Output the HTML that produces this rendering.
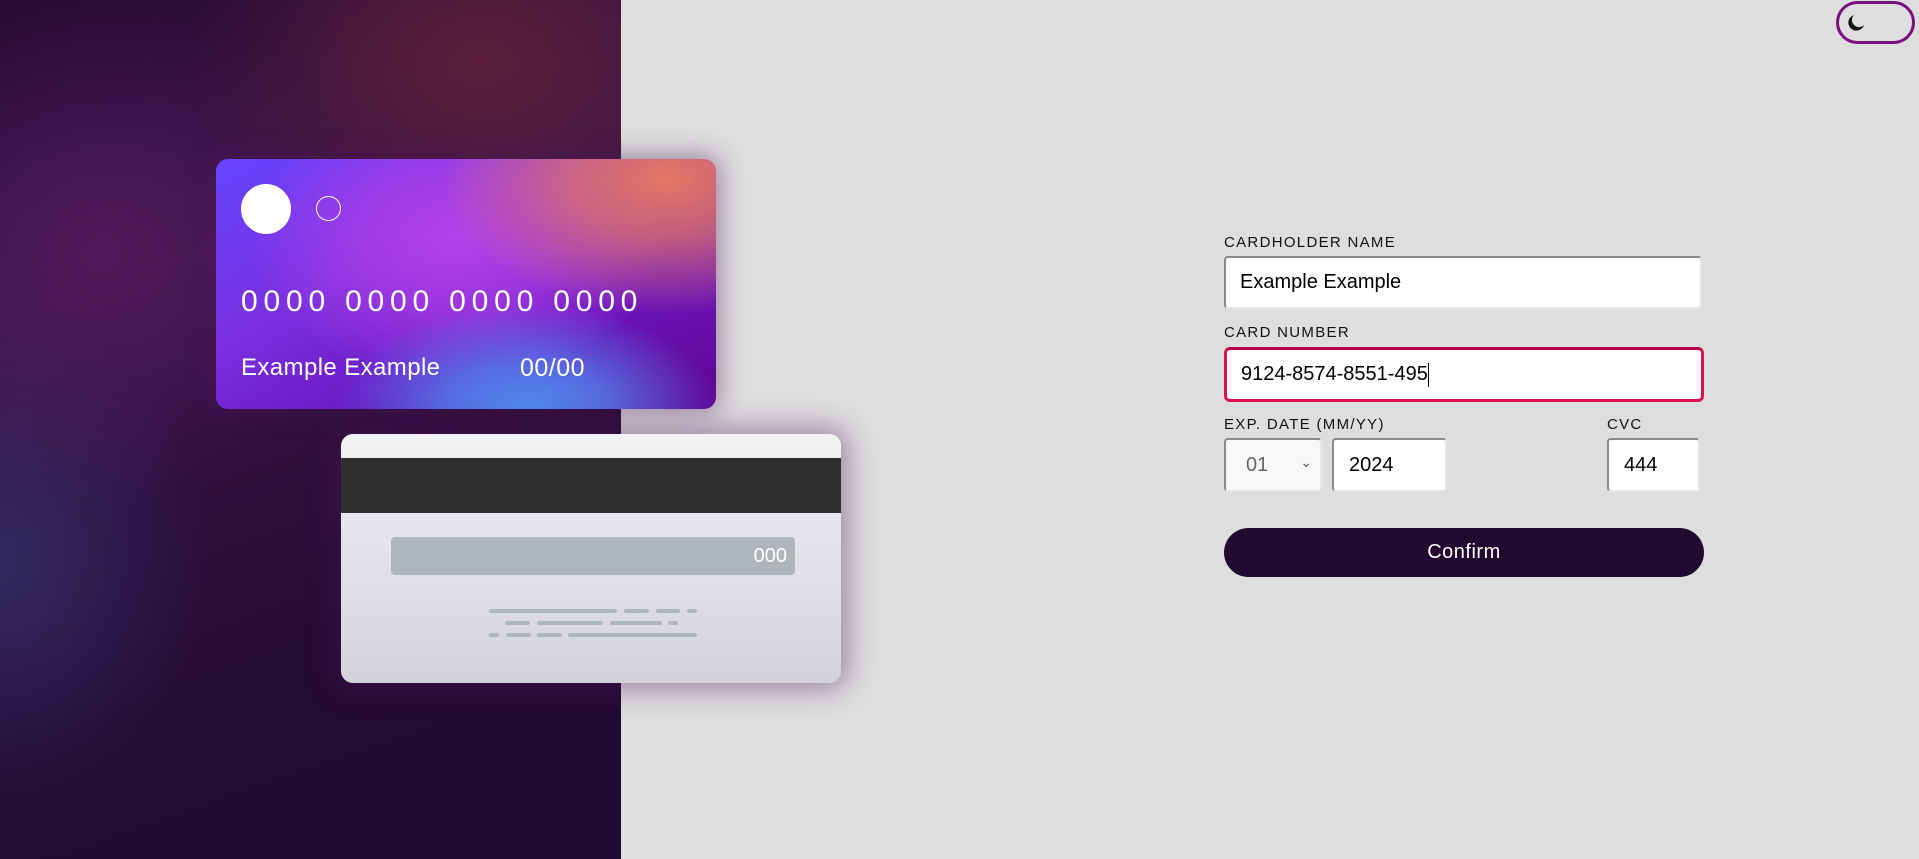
<!DOCTYPE html>
<html><head><meta charset="utf-8"><style>
*{margin:0;padding:0;box-sizing:border-box}
body{width:1919px;height:859px;overflow:hidden;background:#dedede;font-family:"Liberation Sans",sans-serif;position:relative}
.left{position:absolute;left:0;top:0;width:621px;height:859px;background:
radial-gradient(ellipse 420px 300px at 480px 60px,rgba(100,35,55,.85),transparent 70%),
radial-gradient(ellipse 380px 360px at 100px 250px,rgba(85,28,95,.8),transparent 70%),
radial-gradient(ellipse 300px 360px at 0px 560px,rgba(50,45,100,.9),transparent 70%),
linear-gradient(160deg,#250a33 0%,#3a1448 30%,#240b33 70%,#220a30 100%)}
.front{position:absolute;left:216px;top:159px;width:500px;height:250px;border-radius:12px;overflow:hidden;
box-shadow:0 0 25px 4px rgba(80,20,90,.45);
background:
radial-gradient(ellipse 280px 170px at 450px 20px,rgba(228,120,100,1) 0%,rgba(228,120,100,.7) 35%,transparent 80%),
radial-gradient(ellipse 240px 130px at 310px 250px,rgba(80,140,240,1) 0%,rgba(80,140,240,.7) 35%,transparent 80%),
radial-gradient(ellipse 260px 180px at 240px 80px,rgba(180,65,232,1) 0%,rgba(180,65,232,.6) 40%,transparent 80%),
radial-gradient(ellipse 200px 150px at 500px 240px,rgba(96,8,150,1),transparent 80%),
linear-gradient(150deg,#6446ff 0%,#7a30e0 35%,#6a16c0 65%,#6a10b0 100%)}
.back{position:absolute;left:341px;top:434px;width:500px;height:249px;border-radius:12px;overflow:hidden;
box-shadow:0 0 28px 6px rgba(80,20,90,.45);background:linear-gradient(180deg,#f3f3f5,#d2d2d8)}
.c1{position:absolute;left:241px;top:184px;width:50px;height:50px;border-radius:50%;background:#fff}
.c2{position:absolute;left:316px;top:196px;width:25px;height:25px;border-radius:50%;border:1px solid #fff}
.num{position:absolute;left:241px;top:285px;color:#fff;font-size:30px;letter-spacing:5.8px;font-family:"Liberation Sans",sans-serif}
.nm{position:absolute;left:241px;top:354px;color:#fff;font-size:24px;letter-spacing:.4px}
.dt{position:absolute;left:520px;top:354px;color:#fff;font-size:25px;letter-spacing:.5px}
.lines div{position:absolute;height:4px;border-radius:2px;background:#b0b6bd}
label{position:absolute;font-size:15px;letter-spacing:1.3px;color:#111}
.inp{position:absolute;background:#fff;border:2px solid #8a8a8a;border-right-color:#e6e6e6;border-bottom-color:#e6e6e6;border-radius:4px;font-size:20px;color:#000;padding-left:14px;display:flex;align-items:center}
</style></head><body>
<div class="left"></div>
<div class="front"></div>
<div class="c1"></div><div class="c2"></div>
<div class="num">0000 0000 0000 0000</div>
<div class="nm">Example Example</div>
<div class="dt">00/00</div>
<div class="back">
<div style="position:absolute;left:0;top:24px;width:500px;height:55px;background:#2f2f2f"></div>
<div style="position:absolute;left:50px;top:103px;width:404px;height:38px;border-radius:4px;background:#aeb5bd;color:#fff;font-size:20px;text-align:right;padding-right:8px;line-height:38px">000</div>
</div>
<div class="lines">
<div style="left:489px;top:609px;width:128px"></div><div style="left:624px;top:609px;width:25px"></div><div style="left:656px;top:609px;width:24px"></div><div style="left:687px;top:609px;width:10px"></div>
<div style="left:505px;top:621px;width:25px"></div><div style="left:537px;top:621px;width:66px"></div><div style="left:610px;top:621px;width:52px"></div><div style="left:668px;top:621px;width:10px"></div>
<div style="left:489px;top:633px;width:10px"></div><div style="left:506px;top:633px;width:25px"></div><div style="left:537px;top:633px;width:25px"></div><div style="left:568px;top:633px;width:129px"></div>
</div>
<label style="left:1224px;top:234px">CARDHOLDER NAME</label>
<div class="inp" style="left:1224px;top:256px;width:478px;height:53px">Example Example</div>
<label style="left:1224px;top:324px">CARD NUMBER</label>
<div class="inp" style="left:1224px;top:347px;width:480px;height:55px;border:3px solid #e0104c;border-top-color:#b8004a;border-radius:6px">9124-8574-8551-495<span style="display:inline-block;width:1px;height:24px;background:#000"></span></div>
<label style="left:1224px;top:416px">EXP. DATE (MM/YY)</label>
<div class="inp" style="left:1224px;top:438px;width:98px;height:54px;background:#f8f8f8;color:#666;padding-left:20px">01<span style="position:absolute;right:8px;top:14px;font-size:14px;color:#555">⌄</span></div>
<div class="inp" style="left:1332px;top:438px;width:115px;height:54px;padding-left:15px">2024</div>
<label style="left:1607px;top:416px">CVC</label>
<div class="inp" style="left:1607px;top:438px;width:93px;height:54px;padding-left:15px">444</div>
<div style="position:absolute;left:1224px;top:528px;width:480px;height:49px;border-radius:25px;background:#22092f;color:#fff;font-size:20px;text-align:center;line-height:49px;letter-spacing:.5px">Confirm</div>
<div style="position:absolute;left:1836px;top:1px;width:79px;height:43px;border:3px solid #7a0f80;border-radius:22px"></div>
<svg style="position:absolute;left:1846px;top:13px" width="20" height="20" viewBox="0 0 20 20"><path d="M8 2 A8 8 0 1 0 18 12 A6 6 0 1 1 8 2Z" fill="#111"/></svg>
</body></html>
